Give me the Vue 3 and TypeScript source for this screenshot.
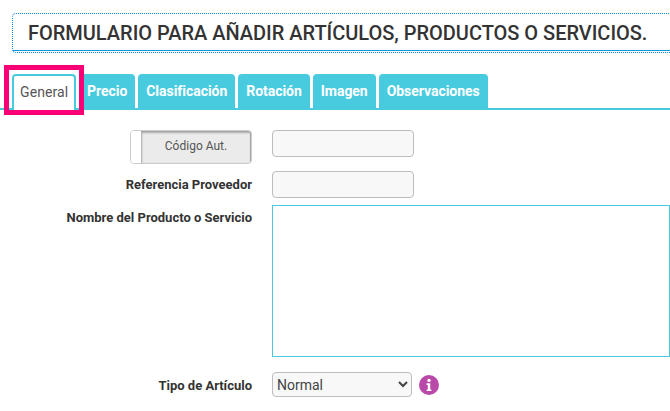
<script setup lang="ts">
const tabs: string[] = ['Precio', 'Clasificación', 'Rotación', 'Imagen', 'Observaciones']
</script>

<template>
  <div class="page">
    <div class="title-box">
      <div class="title-inner">
        <h1 class="title">FORMULARIO PARA AÑADIR ARTÍCULOS, PRODUCTOS O SERVICIOS.</h1>
      </div>
    </div>

    <div class="tabs">
      <div class="tab active">General</div>
      <div v-for="t in tabs" :key="t" class="tab">{{ t }}</div>
      <div class="highlight"></div>
    </div>

    <div class="form">
      <div class="row row-toggle">
        <div class="label-col">
          <div class="toggle">
            <span class="toggle-handle"></span>
            <span class="toggle-label">Código Aut.</span>
          </div>
        </div>
        <input class="field" type="text" />
      </div>
      <div class="row row-ref">
        <label class="label-col label">Referencia Proveedor</label>
        <input class="field" type="text" />
      </div>
      <div class="row row-name">
        <label class="label-col label label-top">Nombre del Producto o Servicio</label>
        <textarea class="area"></textarea>
      </div>
      <div class="row row-type">
        <label class="label-col label">Tipo de Artículo</label>
        <select class="select">
          <option>Normal</option>
        </select>
        <svg class="info" width="20" height="20" viewBox="0 0 20 20" aria-hidden="true">
          <circle cx="10" cy="10" r="10" fill="#b949a8" />
          <circle cx="10" cy="5.4" r="1.7" fill="#fff" />
          <path d="M7.6 8.3h3.6v6.2h1.2v1.6H7.6v-1.6h1.2V9.9H7.6z" fill="#fff" />
        </svg>
      </div>
    </div>
  </div>
</template>

<style scoped>
.page {
  width: 670px;
  height: 411px;
  overflow: hidden;
  font-family: Roboto, "Liberation Sans", sans-serif;
  color: #333;
  background: #fff;
  padding-top: 13px;
  box-sizing: border-box;
}
.title-box {
  margin-left: 12px;
  width: 680px;
  height: 40px;
  box-sizing: border-box;
  border: 1px dotted #0a8fd6;
  border-right: 0;
  border-radius: 4px 0 0 4px;
}
.title-inner {
  height: 37px;
  box-sizing: border-box;
  border-bottom: 1px solid #0a95dc;
  padding-left: 15px;
  display: flex;
  align-items: center;
}
.title {
  margin: 0;
  padding-top: 1px;
  font-size: 20px;
  font-weight: 500;
  letter-spacing: -0.02px;
  color: #333;
  white-space: nowrap;
  line-height: 36px;
}
.tabs {
  position: relative;
  margin-top: 21px;
  height: 36px;
  box-sizing: border-box;
  padding-left: 12px;
  border-bottom: 2px solid #48cbdf;
  display: flex;
  gap: 3px;
}
.tab {
  height: 34px;
  box-sizing: border-box;
  padding: 0 8px;
  display: flex;
  align-items: center;
  background: #48cbdf;
  color: #fff;
  font-size: 14px;
  font-weight: 700;
  letter-spacing: -0.04px;
  border-radius: 4px 4px 0 0;
  white-space: nowrap;
}
.tab.active {
  width: 64px;
  height: 36px;
  background: #fff;
  color: #555;
  font-weight: 400;
  letter-spacing: 0.1px;
  border: 2px solid #48cbdf;
  border-bottom: 0;
  padding: 0 6px 2px;
}
.highlight {
  position: absolute;
  left: 4px;
  top: -9px;
  width: 80px;
  height: 50px;
  box-sizing: border-box;
  border: 5px solid #fa0076;
  pointer-events: none;
}
.form {
  padding-top: 20px;
}
.row {
  display: flex;
  align-items: flex-start;
}
.label-col {
  width: 252px;
  flex: none;
  margin-right: 20px;
  display: flex;
  justify-content: flex-end;
}
.label {
  font-size: 13px;
  font-weight: 700;
  color: #333;
  line-height: 27px;
  white-space: nowrap;
}
.label-top {
  line-height: 25px;
}
.row-ref {
  margin-top: 14px;
}
.row-name {
  margin-top: 7px;
}
.row-type {
  margin-top: 15px;
  align-items: center;
}
.toggle {
  width: 122px;
  height: 34px;
  box-sizing: border-box;
  border: 1px solid #ccc;
  border-radius: 4px;
  display: flex;
  overflow: hidden;
  background: #fff;
}
.row-toggle {
  height: 27px;
}
.toggle-handle {
  width: 10px;
  flex: none;
  background: #fff;
}
.toggle-label {
  flex: 1;
  display: flex;
  align-items: center;
  justify-content: center;
  background: #ebebeb;
  box-shadow: inset 1px 2px 2px rgba(0, 0, 0, 0.28), inset -1px 0 1px rgba(0, 0, 0, 0.3);
  color: #555;
  font-size: 12px;
  padding-bottom: 2px;
  box-sizing: border-box;
}
.field {
  width: 142px;
  height: 27px;
  box-sizing: border-box;
  border: 1px solid #bdbdbd;
  border-radius: 4px;
  background: #f8f8f8;
  padding: 0 4px;
  margin: 0;
  outline: none;
}
.area {
  display: block;
  width: 420px;
  height: 152px;
  box-sizing: border-box;
  border: 1px solid #48cbdf;
  border-radius: 0;
  background: #fff;
  margin: 0;
  padding: 0;
  outline: none;
  resize: none;
}
.select {
  width: 140px;
  height: 25px;
  box-sizing: border-box;
  border: 1px solid #bdbdbd;
  border-radius: 4px;
  background-color: #f8f8f8;
  color: #444;
  font-family: Roboto, "Liberation Sans", sans-serif;
  font-size: 14px;
  margin: 0 0 2px;
  padding: 0;
}
.info {
  margin-left: 7px;
  margin-bottom: 2px;
  flex: none;
}
</style>
